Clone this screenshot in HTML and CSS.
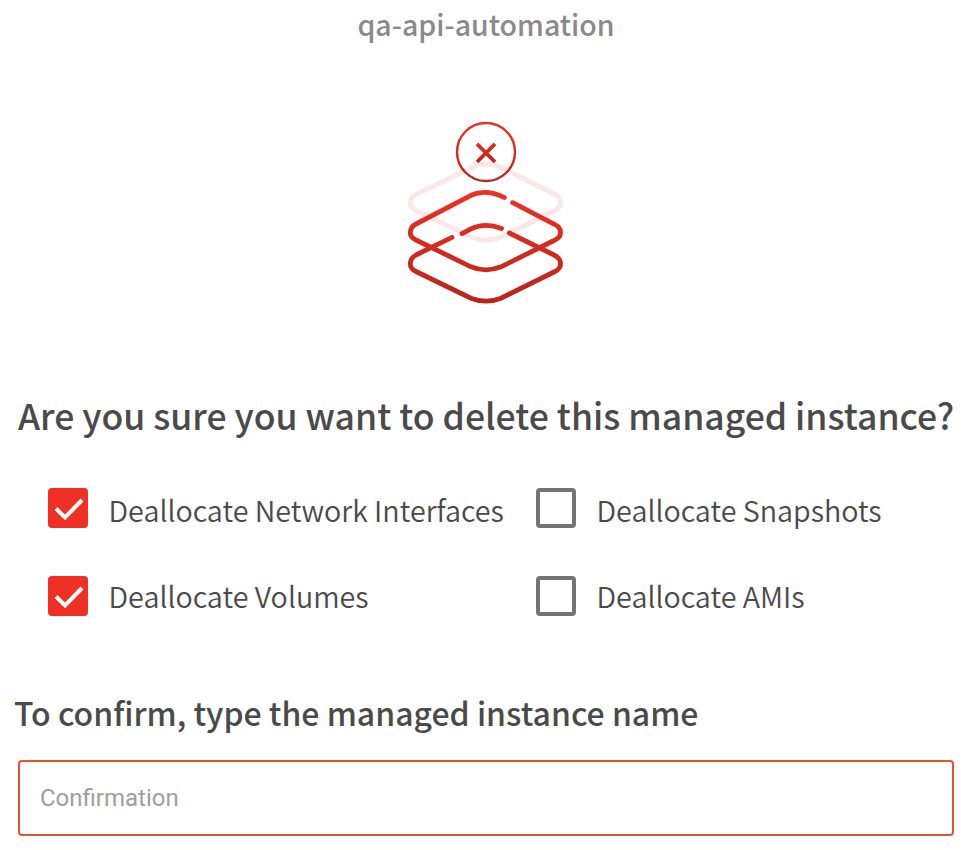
FILE: index.html
```html
<!DOCTYPE html>
<html lang="en">
<head>
<meta charset="utf-8">
<title>Delete managed instance</title>
<link rel="stylesheet" href="styles.css">
</head>
<body>
<main class="dialog">
  <div class="name"><span>qa-api-automation</span></div>
  <svg class="art" viewBox="0 0 180 205" width="180" height="205" fill="none" stroke-linecap="round" aria-hidden="true">
    <defs>
      <linearGradient id="ring" gradientUnits="userSpaceOnUse" x1="0" y1="12" x2="0" y2="72"><stop stop-color="#ee3124"/><stop offset="1" stop-color="#b7241c"/></linearGradient>
      <linearGradient id="cross" gradientUnits="userSpaceOnUse" x1="0" y1="32" x2="0" y2="53"><stop stop-color="#e83024"/><stop offset="1" stop-color="#b7241c"/></linearGradient>
      <linearGradient id="stack" gradientUnits="userSpaceOnUse" x1="0" y1="80" x2="0" y2="194"><stop stop-color="#ee3124"/><stop offset="1" stop-color="#b7241c"/></linearGradient>
    </defs>
    <path stroke="#fbe7e5" stroke-width="4.8" d="M76 57.5Q91 50.5 106 57.5L160 84.500Q165.500 87.500 165.500 92.500Q165.500 97.500 160 100.500L106 127Q91 133.500 76 127L21 100.500Q15.300 97.500 15.300 92.500Q15.300 87.500 21 84.500Z"/>
    <circle cx="91" cy="42" r="29" stroke="url(#ring)" stroke-width="2.400"/>
    <path stroke="url(#cross)" stroke-width="3.800" stroke-linecap="butt" d="M82 33.800L100 52M100 33.800L82 52"/>
    <g stroke="url(#stack)" stroke-width="4.800">
      <path d="M109.300 87.400Q91 78.500 76 85.300L21 114Q15.300 117 15.300 122.800Q15.300 127.500 21 130L76 156.800Q91 163 106 156.800L160 130Q165.500 127.500 165.500 122.500Q165.500 117.500 160 114.500L117.700 92.700"/>
      <path d="M57 127.400L21 145Q15.300 148 15.300 154Q15.300 158.700 21 161.500L76 188.200Q91 194.200 106 188.200L160 161.500Q165.500 158.700 165.500 154Q165.500 148.200 160 145.500L114.300 123"/>
      <path d="M67 123.700L76 118.800Q90 112 106.500 118.400"/>
    </g>
  </svg>
  <h1 class="question"><span>Are you sure you want to delete this managed instance?</span></h1>
  <div class="options">
    <label class="option"><span class="box checked"><svg viewBox="0 0 40 40" width="40" height="40"><path d="M8 20.500L17 29.500L34 12" fill="none" stroke="#fff" stroke-width="4"/></svg></span><span class="text">Deallocate Network Interfaces</span></label>
    <label class="option"><span class="box"></span><span class="text">Deallocate Snapshots</span></label>
    <label class="option lower"><span class="box checked"><svg viewBox="0 0 40 40" width="40" height="40"><path d="M8 20.500L17 29.500L34 12" fill="none" stroke="#fff" stroke-width="4"/></svg></span><span class="text">Deallocate Volumes</span></label>
    <label class="option lower"><span class="box"></span><span class="text">Deallocate AMIs</span></label>
  </div>
  <h2 class="prompt"><span>To confirm, type the managed instance name</span></h2>
  <input class="field" type="text" placeholder="Confirmation">
</main>
</body>
</html>
```
FILE: styles.css
```css
* { box-sizing: border-box; }
body {
  margin: 0;
  background: #fff;
  color: #4a4a4a;
  font-family: "Noto Sans CJK SC", "Open Sans", sans-serif;
}
.dialog {
  display: flex;
  flex-direction: column;
  width: 980px;
  height: 850px;
  padding: 0 26px 14px 18px;
  overflow: hidden;
}
.name {
  height: 48px;
  line-height: 48px;
  text-align: center;
  font-size: 28.5px;
  font-weight: 500;
  color: #8a8a8a;
  white-space: nowrap;
}
.art { display: block; margin: 62px 0 0 377px; flex: none; }
.question {
  margin: 70px 0 0;
  height: 60px;
  line-height: 60px;
  font-size: 35.52px;
  font-weight: 500;
  white-space: nowrap;
}
.options {
  display: grid;
  grid-template-columns: 488px 1fr;
  row-gap: 48px;
  margin: 43px 0 0 30px;
}
.option { display: flex; align-items: center; gap: 20.5px; height: 40px; }
.box { width: 40px; height: 40px; flex: none; border: 4px solid #757575; border-radius: 4px; }
.box.checked { border: 0; background: #ee3124; }
.box svg { display: block; }
.text { font-size: 28.7px; line-height: 40px; font-weight: 350; white-space: nowrap; padding-top: 4px; }
.lower .text { padding: 0; }
.prompt {
  margin: 66px 0 0 -4px;
  height: 60px;
  line-height: 60px;
  font-size: 31.97px;
  font-weight: 500;
  white-space: nowrap;
}
.field {
  margin: 18px 0 0;
  width: 936px;
  height: 76px;
  padding: 0 20px;
  border: 2px solid #e05536;
  border-radius: 4px;
  outline: 0;
  font: 24px Roboto, sans-serif;
}
.field::placeholder { color: #9e9e9e; }
```
